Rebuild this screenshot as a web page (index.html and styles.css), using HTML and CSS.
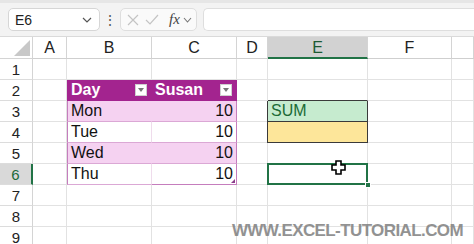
FILE: index.html
```html
<!DOCTYPE html>
<html>
<head>
<meta charset="utf-8">
<link rel="stylesheet" href="styles.css">
</head>
<body>
<div class="app">
  <div class="toolbar">
    <div class="namebox"><span>E6</span>
      <svg class="chev" width="10" height="6" viewBox="0 0 10 6"><path d="M1 1 L5 5 L9 1" fill="none" stroke="#555" stroke-width="1.2"/></svg>
    </div>
    <div class="dots">⋮</div>
    <div class="fbtns">
      <svg width="12" height="12" viewBox="0 0 12 12"><path d="M1 1 L11 11 M11 1 L1 11" stroke="#c4c4c4" stroke-width="1.2"/></svg>
      <svg width="14" height="12" viewBox="0 0 14 12"><path d="M1 6 L5 10 L13 1" fill="none" stroke="#c4c4c4" stroke-width="1.2"/></svg>
      <span class="fx">fx</span>
      <svg class="chev2" width="9" height="6" viewBox="0 0 9 6"><path d="M1 1 L4.5 5 L8 1" fill="none" stroke="#777" stroke-width="1.1"/></svg>
    </div>
    <div class="finput"></div>
  </div>
  <div class="sheet">
    <div class="grid">
      <div class="corner"><svg width="16" height="16" viewBox="0 0 16 16"><path d="M16 0 L16 16 L0 16 Z" fill="#c8c8c8"/></svg></div>
      <div class="ch">A</div><div class="ch">B</div><div class="ch">C</div><div class="ch">D</div><div class="ch sel">E</div><div class="ch">F</div><div class="ch"></div>

      <div class="rh">1</div><div class="c"></div><div class="c"></div><div class="c"></div><div class="c"></div><div class="c"></div><div class="c"></div><div class="c"></div>

      <div class="rh">2</div><div class="c"></div>
      <div class="c th thl">Day<span class="flt"></span></div>
      <div class="c th thr">Susan<span class="flt"></span></div>
      <div class="c"></div><div class="c sumtop"></div><div class="c"></div><div class="c"></div>

      <div class="rh">3</div><div class="c"></div>
      <div class="c tb band tl">Mon</div><div class="c tb band tr num">10</div>
      <div class="c"></div><div class="c sum">SUM</div><div class="c"></div><div class="c"></div>

      <div class="rh">4</div><div class="c"></div>
      <div class="c tb tl">Tue</div><div class="c tb tr num">10</div>
      <div class="c"></div><div class="c res"></div><div class="c"></div><div class="c"></div>

      <div class="rh">5</div><div class="c"></div>
      <div class="c tb band tl">Wed</div><div class="c tb band tr num">10</div>
      <div class="c"></div><div class="c"></div><div class="c"></div><div class="c"></div>

      <div class="rh sel">6</div><div class="c"></div>
      <div class="c tb tl">Thu</div><div class="c tb tr num last">10<span class="rsz"></span></div>
      <div class="c"></div><div class="c active"><span class="handle"></span>
        <svg class="cursor" width="15" height="15" viewBox="0 0 15 15"><path d="M5 1 H10 V5 H14 V10 H10 V14 H5 V10 H1 V5 H5 Z" fill="#fff" stroke="#000" stroke-width="1.6"/></svg>
      </div><div class="c"></div><div class="c"></div>

      <div class="rh">7</div><div class="c"></div><div class="c"></div><div class="c"></div><div class="c"></div><div class="c"></div><div class="c"></div><div class="c"></div>
      <div class="rh">8</div><div class="c"></div><div class="c"></div><div class="c"></div><div class="c"></div><div class="c"></div><div class="c"></div><div class="c"></div>
      <div class="rh">9</div><div class="c"></div><div class="c"></div><div class="c"></div><div class="c"></div><div class="c"></div><div class="c"></div><div class="c"></div>
    </div>
    <div class="watermark">WWW.EXCEL-TUTORIAL.COM</div>
  </div>
</div>
</body>
</html>
```

FILE: styles.css
```css
* { box-sizing: border-box; }
html, body { margin: 0; padding: 0; }
body {
  width: 474px; height: 244px; overflow: hidden;
  font-family: "Liberation Sans", Arial, sans-serif;
  background: #fff;
}
.app { width: 474px; height: 244px; }
.toolbar {
  height: 37px;
  background: #f3f3f3;
  border-top: 3px solid #e6e6e6;
  border-bottom: 1px solid #dadada;
  display: flex; align-items: center;
  padding: 0 0 0 8px;
}
.namebox {
  width: 92px; height: 23px;
  background: #fff; border: 1px solid #d6d6d6; border-radius: 5px;
  display: flex; align-items: center; justify-content: space-between;
  padding: 0 7px 0 6px;
  font-size: 14px; color: #222;
}
.dots { width: 20px; text-align: center; color: #555; font-size: 14px; line-height: 1; }
.fbtns {
  width: 77px; height: 23px;
  background: #fafafa; border: 1px solid #dedede; border-radius: 5px;
  display: flex; align-items: center; gap: 6px;
  padding: 0 0 0 6px;
}
.fx { font-family: "Liberation Serif", serif; font-style: italic; font-size: 15px; color: #444; margin-left: 4px; }
.chev2 { margin-left: -3px; }
.finput {
  flex: 1; height: 23px; margin-left: 6px;
  background: #fff; border: 1px solid #dedede; border-right: none; border-radius: 5px 0 0 5px;
}
.sheet { position: relative; height: 207px; overflow: hidden; }
.grid {
  display: grid;
  grid-template-columns: 33px 34px 85px 85px 31px 100px 84px 1fr;
  grid-template-rows: 22px repeat(9, 21px);
}
.corner { border-right: 1px solid #d4d4d4; border-bottom: 1px solid #d4d4d4; display: flex; align-items: flex-end; justify-content: flex-end; padding: 0 2px 2px 0; background: #fff; }
.ch {
  border-right: 1px solid #d4d4d4; border-bottom: 1px solid #cfcfcf;
  font-size: 16px; color: #222; text-align: center; line-height: 21px;
  background: #fff;
}
.ch.sel { background: #d2d2d2; border-bottom: 2px solid #217346; color: #1d5a34; }
.rh {
  border-right: 1px solid #d4d4d4; border-bottom: 1px solid #dcdcdc;
  font-size: 15px; color: #222; text-align: center; line-height: 21px;
  background: #fff;
}
.rh.sel { background: #d9d9d9; border-right: 2px solid #217346; color: #1d6b3a; }
.c {
  border-right: 1px solid #e2e2e2; border-bottom: 1px solid #e2e2e2;
  font-size: 16px; line-height: 20px; color: #111;
  padding: 0 3px; white-space: nowrap; position: relative;
}
.th {
  background: #a3248f; color: #fff; font-weight: bold;
  border-right-color: #a3248f; border-bottom-color: #a3248f;
  display: flex; align-items: center; justify-content: space-between;
  padding-right: 4px;
}
.thl { border-left: 1px solid #a3248f; }
.flt {
  width: 12px; height: 12px; background: #fff; border: 1px solid #cfcfcf;
  position: relative;
}
.flt::after {
  content: ""; position: absolute; left: 2px; top: 3px;
  border-left: 3px solid transparent; border-right: 3px solid transparent; border-top: 4px solid #777;
}
.tb { border-bottom: 1px solid #dba8d5; border-right-color: #efdcec; }
.tb.band { background: #f5d2f1; border-right-color: #f5d2f1; }
.tl { border-left: 1px solid #c57dbd; }
.tr { border-right: 1px solid #c57dbd !important; }
.num { text-align: right; padding-right: 3px; }
.tb.last { border-bottom-color: #c57dbd; }
.rsz {
  position: absolute; right: 1px; bottom: 1px; width: 0; height: 0;
  border-left: 4px solid transparent; border-bottom: 4px solid #8a3c8a;
}
.sumtop { border-bottom: 1px solid #3a3a3a; }
.sum {
  background: #c6ebcf; color: #1c6a36;
  border-left: 1px solid #3a3a3a; border-right: 1px solid #3a3a3a; border-bottom: 1px solid #3a3a3a;
  margin-left: -1px;
}
.res {
  background: #fde69a;
  border-left: 1px solid #3a3a3a; border-right: 1px solid #3a3a3a; border-bottom: 1px solid #3a3a3a;
  margin-left: -1px;
}
.active { box-shadow: inset 0 0 0 2px #217346; margin: -1px 0 0 -1px; border: none; z-index: 2; }
.handle {
  position: absolute; right: -3px; bottom: -3px; width: 6px; height: 6px;
  background: #217346; border: 1px solid #fff;
}
.cursor { position: absolute; left: 64px; top: -3px; }
.watermark {
  position: absolute; right: 11px; bottom: 3px;
  font-size: 17px; font-weight: bold; color: #808080; opacity: 0.85;
  letter-spacing: -0.6px;
}
```
